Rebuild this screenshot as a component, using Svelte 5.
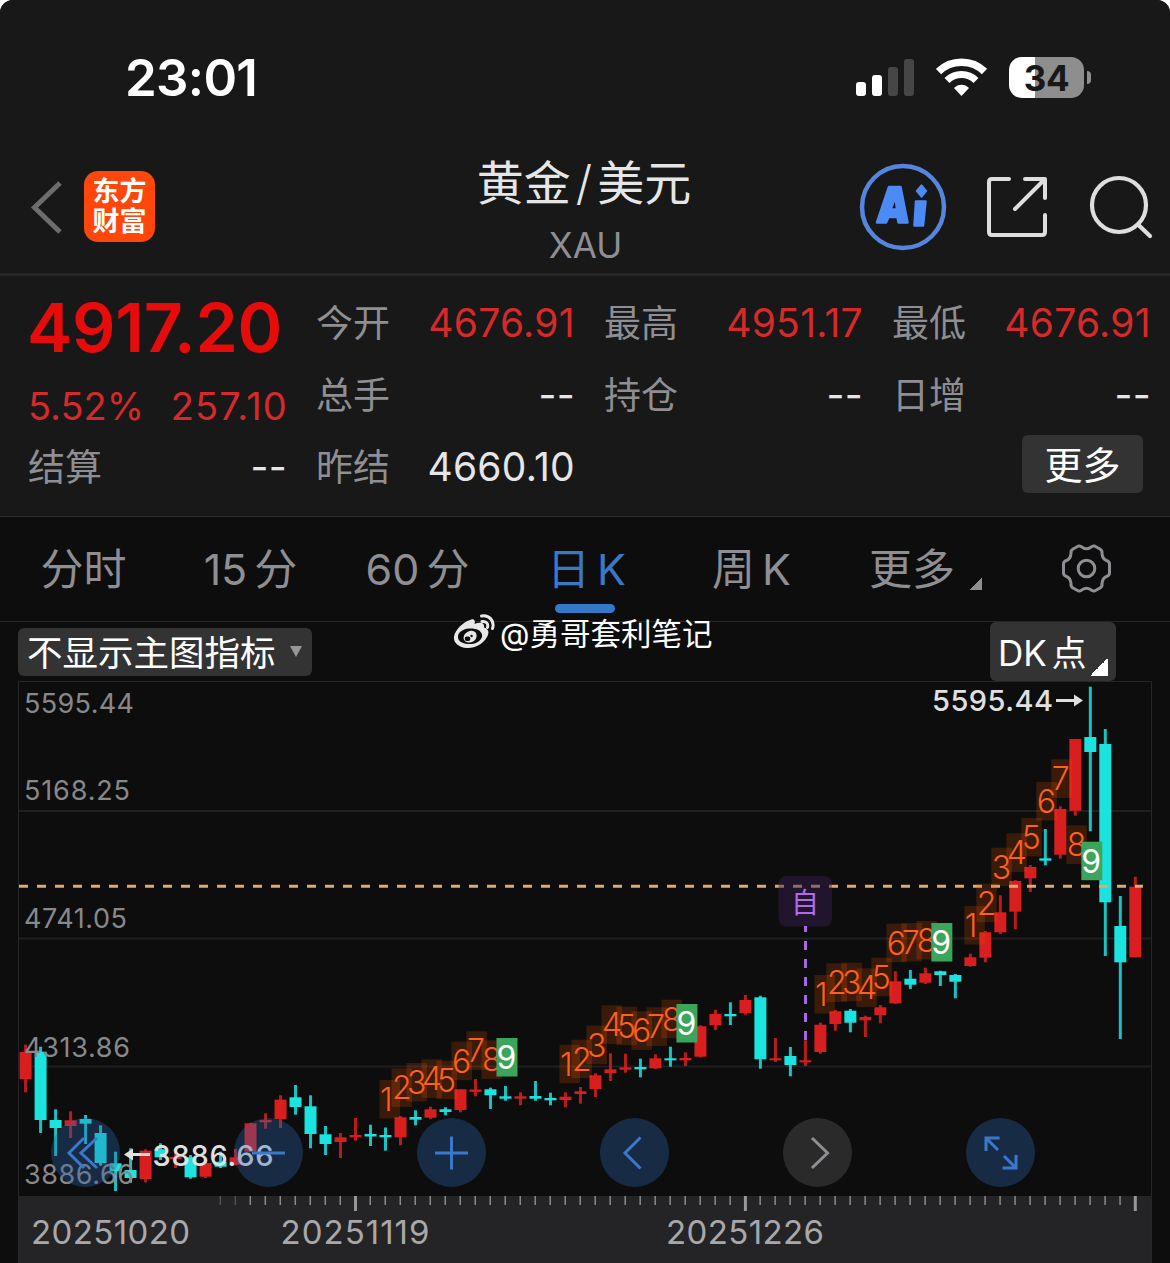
<script>
  const quoteRows = [
    [
      { label: '今开', value: '4676.91', up: true },
      { label: '最高', value: '4951.17', up: true },
      { label: '最低', value: '4676.91', up: true },
    ],
    [
      { label: '总手', value: '--' },
      { label: '持仓', value: '--' },
      { label: '日增', value: '--' },
    ],
  ];

  const tabs = ['分时', '15 分', '60 分', '日 K', '周 K', '更多'];
  let activeTab = '日 K';

  const FIRST_X = 25.6;
  const STEP = 14.996;
  const xOf = (i) => FIRST_X + i * STEP;

  // [direction, high, body top, body bottom, low]
  const candles = [
    ['r', 1044.7, 1052, 1079, 1092.3],
    ['c', 1046.7, 1051.7, 1120, 1133],
    ['c', 1109.3, 1120, 1128, 1156],
    ['r', 1111.3, 1120.3, 1126, 1138],
    ['c', 1115, 1119, 1123.7, 1144],
    ['c', 1125.3, 1133, 1163, 1165.7],
    ['c', 1151.7, 1163.3, 1171.3, 1191],
    ['c', 1148.3, 1170, 1178, 1182.7],
    ['r', 1149.3, 1150.7, 1179, 1182.3],
    ['c', 1143.3, 1149.3, 1157.3, 1160],
    ['r', 1152, 1157, 1159, 1168],
    ['c', 1155, 1157.3, 1177.3, 1178.7],
    ['r', 1162, 1163, 1176.7, 1178],
    ['c', 1151.7, 1161.7, 1166.7, 1168],
    ['r', 1149, 1157.3, 1164.7, 1165.5],
    ['r', 1122.7, 1123.3, 1151.7, 1152],
    ['r', 1113.3, 1120, 1122.3, 1128.7],
    ['r', 1095.3, 1099.7, 1119, 1128],
    ['c', 1085, 1097.3, 1107, 1114.7],
    ['c', 1095.3, 1106.3, 1134, 1148.3],
    ['c', 1126, 1134.3, 1144, 1155],
    ['r', 1133, 1137.3, 1142, 1158],
    ['r', 1118, 1135, 1137.3, 1140.7],
    ['c', 1124.7, 1134, 1136.5, 1146],
    ['c', 1127.5, 1135, 1137.3, 1150.7],
    ['r', 1116, 1117.3, 1137.3, 1145.3],
    ['c', 1110.3, 1117, 1119.7, 1125.3],
    ['r', 1106.7, 1109.3, 1117.7, 1119],
    ['c', 1107.3, 1109.3, 1112, 1115.3],
    ['r', 1089.3, 1089.3, 1110, 1112.3],
    ['r', 1079, 1089.5, 1091.8, 1096.3],
    ['c', 1087.7, 1089.3, 1095.3, 1109],
    ['c', 1086, 1096.3, 1098.7, 1100.7],
    ['r', 1092.3, 1096.3, 1098.7, 1105.3],
    ['c', 1081, 1096, 1098.7, 1100.7],
    ['c', 1092.7, 1098, 1100.3, 1105.3],
    ['r', 1092.3, 1096.7, 1100, 1107.3],
    ['r', 1087, 1091.3, 1094, 1103.7],
    ['r', 1073.3, 1075.3, 1089, 1097],
    ['r', 1053.3, 1069.3, 1073, 1081],
    ['r', 1053.7, 1067.3, 1069.7, 1072.7],
    ['c', 1058.7, 1067, 1069.3, 1077.3],
    ['r', 1054.3, 1058.3, 1068.3, 1069],
    ['c', 1046.7, 1058.3, 1060.3, 1066.7],
    ['r', 1052.3, 1058, 1060.3, 1066],
    ['r', 1025.3, 1026.3, 1056.7, 1057.3],
    ['r', 1009.7, 1014, 1025.3, 1030],
    ['c', 1002.3, 1014, 1016.3, 1025],
    ['r', 995, 1000, 1013, 1014.7],
    ['c', 995.7, 997.3, 1059.3, 1068.7],
    ['r', 1038, 1058.3, 1060.3, 1062],
    ['c', 1047, 1056, 1065, 1076.3],
    ['r', 1040.3, 1060.3, 1062.3, 1066],
    ['r', 1022.7, 1024.7, 1052, 1053.7],
    ['r', 1010, 1011.3, 1024, 1030.7],
    ['c', 1009, 1010.7, 1022.7, 1032.3],
    ['r', 1015.7, 1017, 1020.3, 1037],
    ['r', 1005, 1007.3, 1015, 1023.3],
    ['r', 971.3, 981.3, 1003.3, 1004],
    ['c', 970, 978.7, 984.7, 989],
    ['r', 967.7, 973.3, 982.7, 984],
    ['c', 970.7, 971.3, 975, 986],
    ['c', 974, 975, 981.7, 998.3],
    ['r', 953.7, 957.3, 966, 966.7],
    ['r', 931, 932.3, 957.7, 962.3],
    ['r', 895.3, 912.3, 932.3, 934],
    ['r', 880, 881, 911.7, 929.3],
    ['r', 865, 867, 878.3, 892],
    ['c', 829, 858.3, 860.7, 865.3],
    ['r', 806.3, 809, 854.7, 858.7],
    ['r', 739, 739, 810.7, 815.7],
    ['c', 686.7, 737, 752, 831.3],
    ['c', 729, 744, 902.3, 956],
    ['c', 896, 926, 962.3, 1039],
    ['r', 876.7, 886.7, 957.3, 957.3],
  ];

  // nine-count sequences: index of the first candle and the centre of every digit
  const sequences = [
    { start: 24, ys: [1099.3, 1087.7, 1082.3, 1078.7, 1080, 1061, 1050.7, 1059.7, 1057.3] },
    { start: 36, ys: [1064, 1059, 1045, 1024.7, 1026, 1030.7, 1026.7, 1019, 1023.3] },
    { start: 53, ys: [994.3, 982.7, 982, 987.7, 977, 943, 942.3, 940.3, 942.3] },
    { start: 63, ys: [925.3, 903, 867, 852.7, 837.3, 801.3, 778.7, 844.7, 861] },
  ];
  const marks = sequences.flatMap(({ start, ys }) =>
    ys.map((y, n) => ({ n: n + 1, x: xOf(start + n) - (n === 0 ? 6 : 9), y }))
  );

  const prices = [
    { text: '5595.44', y: 713, w: 110 },
    { text: '5168.25', y: 800, w: 106 },
    { text: '4741.05', y: 928, w: 103 },
    { text: '4313.86', y: 1056.5, w: 106 },
    { text: '3886.66', y: 1184, w: 110 },
  ];
  const gridLines = [811, 938.5, 1066.5];

  const dates = [
    { text: '20251020', x: 31, w: 159 },
    { text: '20251119', x: 280.5, w: 149 },
    { text: '20251226', x: 666, w: 158 },
  ];
  const majorTicks = [22, 48, 74];
  const ticks = Array.from({ length: 62 }, (_, i) => i + 13);

  const controls = [
    { name: 'first', d: 'M-2 -15 L-17 0 L-2 15 M11 -15 L-5 0 L11 15' },
    { name: 'zoom out', d: 'M-17 0 H16' },
    { name: 'zoom in', d: 'M-17 0 H16 M-.5 -16.5 V16.5' },
    { name: 'previous', d: 'M5.500 -15.500 L-10 0 L5.500 15.500' },
    { name: 'next', d: 'M-6 -15 L9.500 0 L-6 15', muted: true },
    { name: 'full screen', d: 'M-15 -2 V-15 H-1.500 M-15 -15 L-3 -3 M15 2 V15 H1.500 M15 15 L3 3' },
  ];
</script>

<div class="screen">
  <header>
    <div class="status">
      <span class="time">23:01</span>
      <div class="indicators">
        <svg width="60" height="40" viewBox="0 0 60 40">
          <rect x="0" y="24" width="10" height="14" rx="3" fill="#fff" />
          <rect x="16" y="17" width="10" height="21" rx="3" fill="#fff" />
          <rect x="32" y="9" width="10" height="29" rx="3" fill="#464646" />
          <rect x="48" y="1" width="10" height="37" rx="3" fill="#464646" />
        </svg>
        <svg class="wifi" width="52" height="40" viewBox="0 0 52 40" fill="none" stroke="#fff">
          <path d="M2.500 13.500 C15 1 36 1 48.500 13.500" stroke-width="7.500" />
          <path d="M11 22.500 C19 14.500 32 14.500 40 22.500" stroke-width="7" />
          <path d="M18 30 C22 25.500 29 25.500 33 30 L25.500 38 Z" fill="#fff" stroke="none" />
        </svg>
        <div class="battery"><span>34</span></div>
        <i class="battery-tip"></i>
      </div>
    </div>

    <div class="nav">
      <div class="side">
        <svg width="36" height="60" viewBox="0 0 36 60" fill="none">
          <path d="M30 6 L4.500 30.500 L30 55" stroke="#6d6d6d" stroke-width="5" />
        </svg>
        <div class="logo"><span>东方</span><span>财富</span></div>
      </div>
      <div class="title">
        <h1>黄金<i>/</i>美元</h1>
        <p>XAU</p>
      </div>
      <div class="side actions">
        <svg width="88" height="88" viewBox="0 0 88 88">
          <circle cx="44" cy="44" r="41" fill="none" stroke="#5585dc" stroke-width="4.500" />
          <g fill="#4c8bf5" stroke="#4c8bf5" stroke-width="2.500" stroke-linejoin="round">
            <path fill-rule="evenodd" d="M30 24 H41.500 L48.500 59.500 H39.500 L38.500 54 H29.500 L27 59.500 H18 Z M36.500 33.500 L31.500 46.500 H38 Z" />
            <path d="M57 38.500 H66.500 L64 62.500 H55.500 Z" />
            <path d="M62.500 22 L67.500 28 L62.500 34 L57.500 28 Z" stroke-width="1.500" />
          </g>
        </svg>
        <svg class="share" width="62" height="62" viewBox="0 0 62 62" fill="none" stroke="#dedede" stroke-width="4" stroke-linecap="round" stroke-linejoin="round">
          <path d="M23 3 H6 Q3 3 3 6 V56 Q3 59 6 59 H56 Q59 59 59 56 V39" />
          <path d="M39 3 H59 V22 M58 4 L29 33" />
        </svg>
        <svg class="search" width="66" height="66" viewBox="0 0 66 66" fill="none" stroke="#dedede" stroke-width="4.200" stroke-linecap="round">
          <circle cx="31" cy="31" r="27" />
          <path d="M50.500 51 L62 62" />
        </svg>
      </div>
    </div>
  </header>

  <section class="quote">
    <div class="last">
      <strong>4917.20</strong>
      <div class="change"><span>5.52%</span><span class="diff">257.10</span></div>
    </div>
    {#each quoteRows as row}
      {#each row as cell}
        <div class="cell">
          <label>{cell.label}</label>
          <b class:up={cell.up}>{cell.value}</b>
        </div>
      {/each}
    {/each}
    <div class="cell"><label>结算</label><b>--</b></div>
    <div class="cell"><label>昨结</label><b>4660.10</b></div>
    <div class="cell"></div>
    <div class="cell more-cell"><button class="more">更多</button></div>
  </section>

  <nav class="tabs">
    {#each tabs as tab}
      <button class="tab" class:active={tab === activeTab} class:wide={tab === '更多'} on:click={() => (activeTab = tab)}>
        <span>{tab}</span>
        {#if tab === '更多'}<i class="corner"></i>{/if}
      </button>
    {/each}
    <button class="tab">
      <svg width="52" height="52" viewBox="-26.500 -25.500 52 52" fill="none" stroke="#8e8e93" stroke-width="3">
        <circle r="8.300" />
        <path stroke-linejoin="round" d="M-8 -22.500 Q-6 -23 -4 -21 Q0 -18.500 4 -21 Q6 -23 8 -22.500 L13.500 -19.500 Q16 -18 15.500 -15 Q16 -9.500 20 -8 Q23 -7 23 -4.500 V4.500 Q23 7 20 8 Q16 9.500 15.500 15 Q16 18 13.500 19.500 L8 22.500 Q6 23 4 21 Q0 18.500 -4 21 Q-6 23 -8 22.500 L-13.500 19.500 Q-16 18 -15.500 15 Q-16 9.500 -20 8 Q-23 7 -23 4.500 V-4.500 Q-23 -7 -20 -8 Q-16 -9.500 -15.500 -15 Q-16 -18 -13.500 -19.500 Z" />
      </svg>
    </button>
  </nav>

  <div class="toolbar">
    <button class="indicator"><span>不显示主图指标</span><i></i></button>
    <button class="dk"><span>DK 点</span><i></i></button>
    <div class="watermark">
      <svg width="44" height="36" viewBox="0 0 44 36">
        <path fill="#e8e8e8" fill-rule="evenodd" d="M17 6 C20 4 23 6 21.500 10 C26 8 32 8 31 13.500 C35 14.500 37 18 34 23 C30 30 22 34.500 14 34 C6 33.500 0 29 1 22.500 C2 16 10 8 17 6 Z M16 14.500 C9 15 4.500 19 5 23.500 C5.500 28 11 30.500 18 30 C25 29.500 30 25 29 20.500 C28 16 22.500 14 16 14.500 Z" />
        <path fill="#e8e8e8" fill-rule="evenodd" d="M17 17 C22 16 25 20 23 24.500 C21 29 14 30 11.500 26.500 C9 23 12 18 17 17 Z M14.500 22.500 A2.300 2.300 0 1 0 14.600 27 A2.300 2.300 0 1 0 14.500 22.500 Z M18.500 20.800 A1.200 1.200 0 1 0 18.600 23.200 A1.200 1.200 0 1 0 18.500 20.800 Z" />
        <path fill="none" stroke="#e8e8e8" stroke-width="3" stroke-linecap="round" d="M28.500 2 C36 .5 42 7 39.500 14.500 M29 7.500 C33 7 35.500 9.500 34.500 13.500" />
      </svg>
      <span>@勇哥套利笔记</span>
    </div>
  </div>

  <div class="chart">
    <svg width="1170" height="582" viewBox="0 681 1170 582">
      <rect x="18" y="1196" width="1134" height="67" fill="#242426" />
      <path d="M18.500 1263 V681.500 H1151.500 V1263" fill="none" stroke="#262628" />
      {#each gridLines as y}
        <line x1="19" x2="1151" y1={y} y2={y} stroke="#1f1f20" stroke-width="2" />
      {/each}

      {#each candles as [dir, high, top, bottom, low], i}
        <g fill={dir === 'r' ? '#d81e1e' : '#1be3e0'}>
          <rect class="wick" x={xOf(i) - 1.5} y={high} width="3" height={low - high} />
          <rect x={xOf(i) - 6} y={top} width="12" height={bottom - top} />
        </g>
      {/each}

      {#each prices as p}
        <text class="price" x="24" y={p.y} textLength={p.w}>{p.text}</text>
      {/each}

      <line x1="19" x2="1143" y1="886.300" y2="886.300" stroke="#dbab74" stroke-width="3" stroke-dasharray="9 9" />

      {#each marks as m}
        {#if m.n === 9}
          <rect x={m.x} y={m.y - 19.3} width="21" height="38.500" fill="#3aa55b" />
          <text class="count nine" x={m.x} y={m.y + 11.6}>9</text>
        {:else}
          <rect x={m.x} y={m.y - 19.3} width="20.500" height="38.500" fill="#ff5a00" opacity=".19" />
          <text class="count" x={m.x + 0.5} y={m.y + 11.6}>{m.n}</text>
        {/if}
      {/each}

      <rect x="778.500" y="876" width="53.500" height="50.500" rx="8" fill="#3a1f55" opacity=".45" />
      <text class="own" x="805" y="913">自</text>
      <line x1="805.500" x2="805.500" y1="926" y2="1040" stroke="#a566e8" stroke-width="3" stroke-dasharray="9 9" stroke-dashoffset="3" />

      <text class="extreme" x="932" y="711" textLength="121">5595.44</text>
      <path d="M1056 700.500 H1077" stroke="#e0e0e0" stroke-width="3" />
      <path d="M1074 694.500 L1083 700.500 L1074 706.500 Z" fill="#e0e0e0" />
      <text class="extreme" x="152.500" y="1166" textLength="121">3886.66</text>
      <path d="M130 1154.500 H150" stroke="#e0e0e0" stroke-width="3" />
      <path d="M133 1148.500 L124 1154.500 L133 1160.500 Z" fill="#e0e0e0" />

      {#each ticks as i}
        {#if majorTicks.includes(i)}
          <rect x={xOf(i) - 1.5} y="1196" width="3" height="15" fill="#97979a" />
        {:else}
          <rect x={xOf(i) - 1} y="1196" width="1.500" height="9" fill="#8a8a8d" opacity={i < 15 ? 0.45 : 1} />
        {/if}
      {/each}
      {#each dates as d}
        <text class="date" x={d.x} y="1243.500" textLength={d.w}>{d.text}</text>
      {/each}
    </svg>

    <div class="controls">
      {#each controls as c}
        <button class="control" class:muted={c.muted} aria-label={c.name}>
          <svg width="40" height="40" viewBox="-20 -20 40 40"><path d={c.d} /></svg>
        </button>
      {/each}
    </div>
  </div>
</div>

<style>
  :global(body) {
    background: #fff;
  }

  .screen {
    width: 1170px;
    height: 1263px;
    overflow: hidden;
    border-radius: 13px 13px 0 0;
    background: #0d0d0d;
    color: #e6e6e6;
    font-family: Inter, 'Noto Sans CJK SC', sans-serif;
  }

  button {
    padding: 0;
    border: none;
    background: none;
    color: inherit;
    font: inherit;
    word-spacing: inherit;
  }

  svg {
    display: block;
    flex: none;
  }

  i {
    font-style: normal;
  }

  header {
    box-sizing: border-box;
    height: 276px;
    border-bottom: 3px solid #262627;
    background: #181818;
  }

  .status {
    display: flex;
    align-items: center;
    justify-content: space-between;
    box-sizing: border-box;
    height: 140px;
    padding: 15px 79px 0 125px;
  }

  .time {
    color: #fff;
    font-size: 51px;
    font-weight: 600;
    letter-spacing: -0.7px;
  }

  .indicators {
    display: flex;
    align-items: center;
  }

  .wifi {
    margin-left: 20px;
  }

  .battery {
    width: 75px;
    height: 41px;
    margin-left: 21px;
    border-radius: 13px;
    background: linear-gradient(90deg, #fff 35%, #8e8e8e 35%);
    color: #181818;
    font-size: 35px;
    font-weight: 700;
    letter-spacing: -0.5px;
    line-height: 42px;
    text-align: center;
  }

  .battery-tip {
    width: 4px;
    height: 13px;
    margin-left: 3px;
    border-radius: 0 5px 5px 0;
    background: #8e8e8e;
  }

  .nav {
    display: flex;
    justify-content: space-between;
    height: 133px;
  }

  .side {
    display: flex;
    align-items: center;
    width: 310px;
    padding-left: 30px;
  }

  .logo {
    display: flex;
    flex-direction: column;
    align-items: center;
    justify-content: center;
    width: 71px;
    height: 71px;
    margin-left: 18px;
    border-radius: 14px;
    background: #ff470b;
    color: #fff;
    font-size: 27px;
    font-weight: 700;
    line-height: 30px;
  }

  .title {
    text-align: center;
  }

  h1 {
    margin: 11px 0 0 -2px;
    font-size: 47px;
    font-weight: 400;
    line-height: 64px;
  }

  h1 i {
    margin: 0 5px;
    font-weight: 300;
  }

  .title p {
    margin: 10px 0 0 1px;
    color: #8e8e93;
    font-size: 35px;
    font-weight: 400;
    line-height: 40px;
  }

  .actions {
    justify-content: flex-end;
    padding: 0 16px 0 0;
    width: 324px;
  }

  .share {
    margin-left: 39px;
  }

  .search {
    margin-left: 40px;
  }

  .quote {
    display: grid;
    grid-template-columns: repeat(4, 258px);
    grid-auto-rows: 72px;
    column-gap: 30px;
    box-sizing: border-box;
    height: 241px;
    padding: 11px 28px 0;
    border-bottom: 1px solid #2b2b2c;
    background: #181818;
  }

  .last {
    grid-row: span 2;
    color: #d62a2a;
  }

  .last strong {
    display: block;
    margin-left: -1px;
    color: #e60c0c;
    font-size: 68px;
    font-weight: 600;
    letter-spacing: -0.3px;
    line-height: 80px;
  }

  .change {
    display: flex;
    justify-content: space-between;
    margin: 15px -2px 0 0;
    font-size: 38px;
    line-height: 48px;
  }

  .diff {
    letter-spacing: 1.2px;
  }

  .cell {
    display: flex;
    align-items: center;
    justify-content: space-between;
  }

  .cell label {
    padding-top: 2px;
    color: #8e8e93;
    font-size: 37px;
    line-height: 70px;
  }

  .cell b {
    margin: -1px -1px 0 0;
    color: #e6e6e6;
    font-size: 39px;
    font-weight: 400;
    letter-spacing: 0.3px;
  }

  .cell .up {
    color: #d62a2a;
  }

  .more-cell {
    justify-content: flex-end;
  }

  .more {
    width: 121px;
    height: 58px;
    margin: -7px 7px 0 0;
    padding-top: 2px;
    border-radius: 6px;
    background: #333334;
    color: #fff;
    font-size: 38px;
    line-height: 54px;
  }

  .tabs {
    display: flex;
    box-sizing: border-box;
    height: 105px;
    border-bottom: 1px solid #262627;
    color: #8e8e93;
    font-size: 43px;
    word-spacing: -5px;
  }

  .tab {
    display: flex;
    align-items: center;
    justify-content: center;
    position: relative;
    width: 167px;
    height: 103px;
  }

  .tab span {
    margin-top: -6px;
  }

  .tab.active {
    box-sizing: border-box;
    padding-left: 4px;
    color: #3a78c8;
  }

  .tab.active::after {
    content: '';
    position: absolute;
    bottom: 7px;
    left: 54px;
    width: 60px;
    height: 9px;
    border-radius: 5px;
    background: #3478c8;
  }

  .tab.wide {
    box-sizing: border-box;
    padding-left: 14px;
  }

  .corner {
    align-self: flex-end;
    width: 12px;
    height: 13px;
    margin: 0 0 30px 15px;
    background: linear-gradient(135deg, transparent 50%, #8e8e93 50%);
  }

  .toolbar {
    display: flex;
    align-items: flex-start;
    justify-content: space-between;
    position: relative;
    height: 59px;
    padding: 0 54px 0 18px;
    color: #fff;
    font-size: 35px;
    word-spacing: -5px;
  }

  .indicator {
    display: flex;
    align-items: center;
    justify-content: space-between;
    width: 294px;
    height: 48px;
    margin-top: 6px;
    padding: 0 10px 0 9px;
    border-radius: 6px;
    background: #333334;
    font-size: 35.5px;
  }

  .indicator span {
    margin-top: -3px;
  }

  .indicator i {
    margin-top: -1px;
    border: solid transparent;
    border-width: 11px 6px 0;
    border-top-color: #97979a;
  }

  .dk {
    display: flex;
    align-items: center;
    justify-content: space-between;
    width: 126px;
    height: 59px;
    padding: 0 8px;
    border-radius: 6px;
    background: #333334;
    white-space: nowrap;
  }

  .dk span {
    margin-top: -3px;
  }

  .dk i {
    align-self: flex-end;
    width: 18px;
    height: 18px;
    margin: 0 0 5px -4px;
    background: linear-gradient(135deg, transparent 50%, #fff 50%);
  }

  .watermark {
    display: flex;
    align-items: center;
    position: absolute;
    top: -10px;
    left: 453px;
    height: 40px;
    font-size: 30.5px;
    white-space: nowrap;
  }

  .watermark span {
    margin: -1px 0 0 3px;
  }

  .chart {
    position: relative;
  }

  .wick {
    opacity: 0.85;
  }

  .price {
    fill: #88888b;
    font-size: 27px;
  }

  .date {
    fill: #a8a8ab;
    font-size: 33px;
  }

  .extreme {
    fill: #e0e0e0;
    font-size: 29px;
    font-weight: 500;
  }

  .count {
    fill: #ff5f1f;
    font-size: 32px;
    font-weight: 300;
  }

  .nine {
    fill: #fff;
    font-weight: 400;
  }

  .own {
    fill: #b06be8;
    font-size: 28px;
    text-anchor: middle;
  }

  .controls {
    display: flex;
    gap: 114px;
    position: absolute;
    top: 437px;
    left: 51px;
  }

  .control {
    display: flex;
    align-items: center;
    justify-content: center;
    width: 69px;
    height: 69px;
    border-radius: 50%;
    background: rgba(44, 104, 173, 0.35);
  }

  .control path {
    fill: none;
    stroke: #3a78cc;
    stroke-width: 3;
  }

  .control.muted {
    background: #2a2a2b;
  }

  .control.muted path {
    stroke: #8e8e93;
  }
</style>
